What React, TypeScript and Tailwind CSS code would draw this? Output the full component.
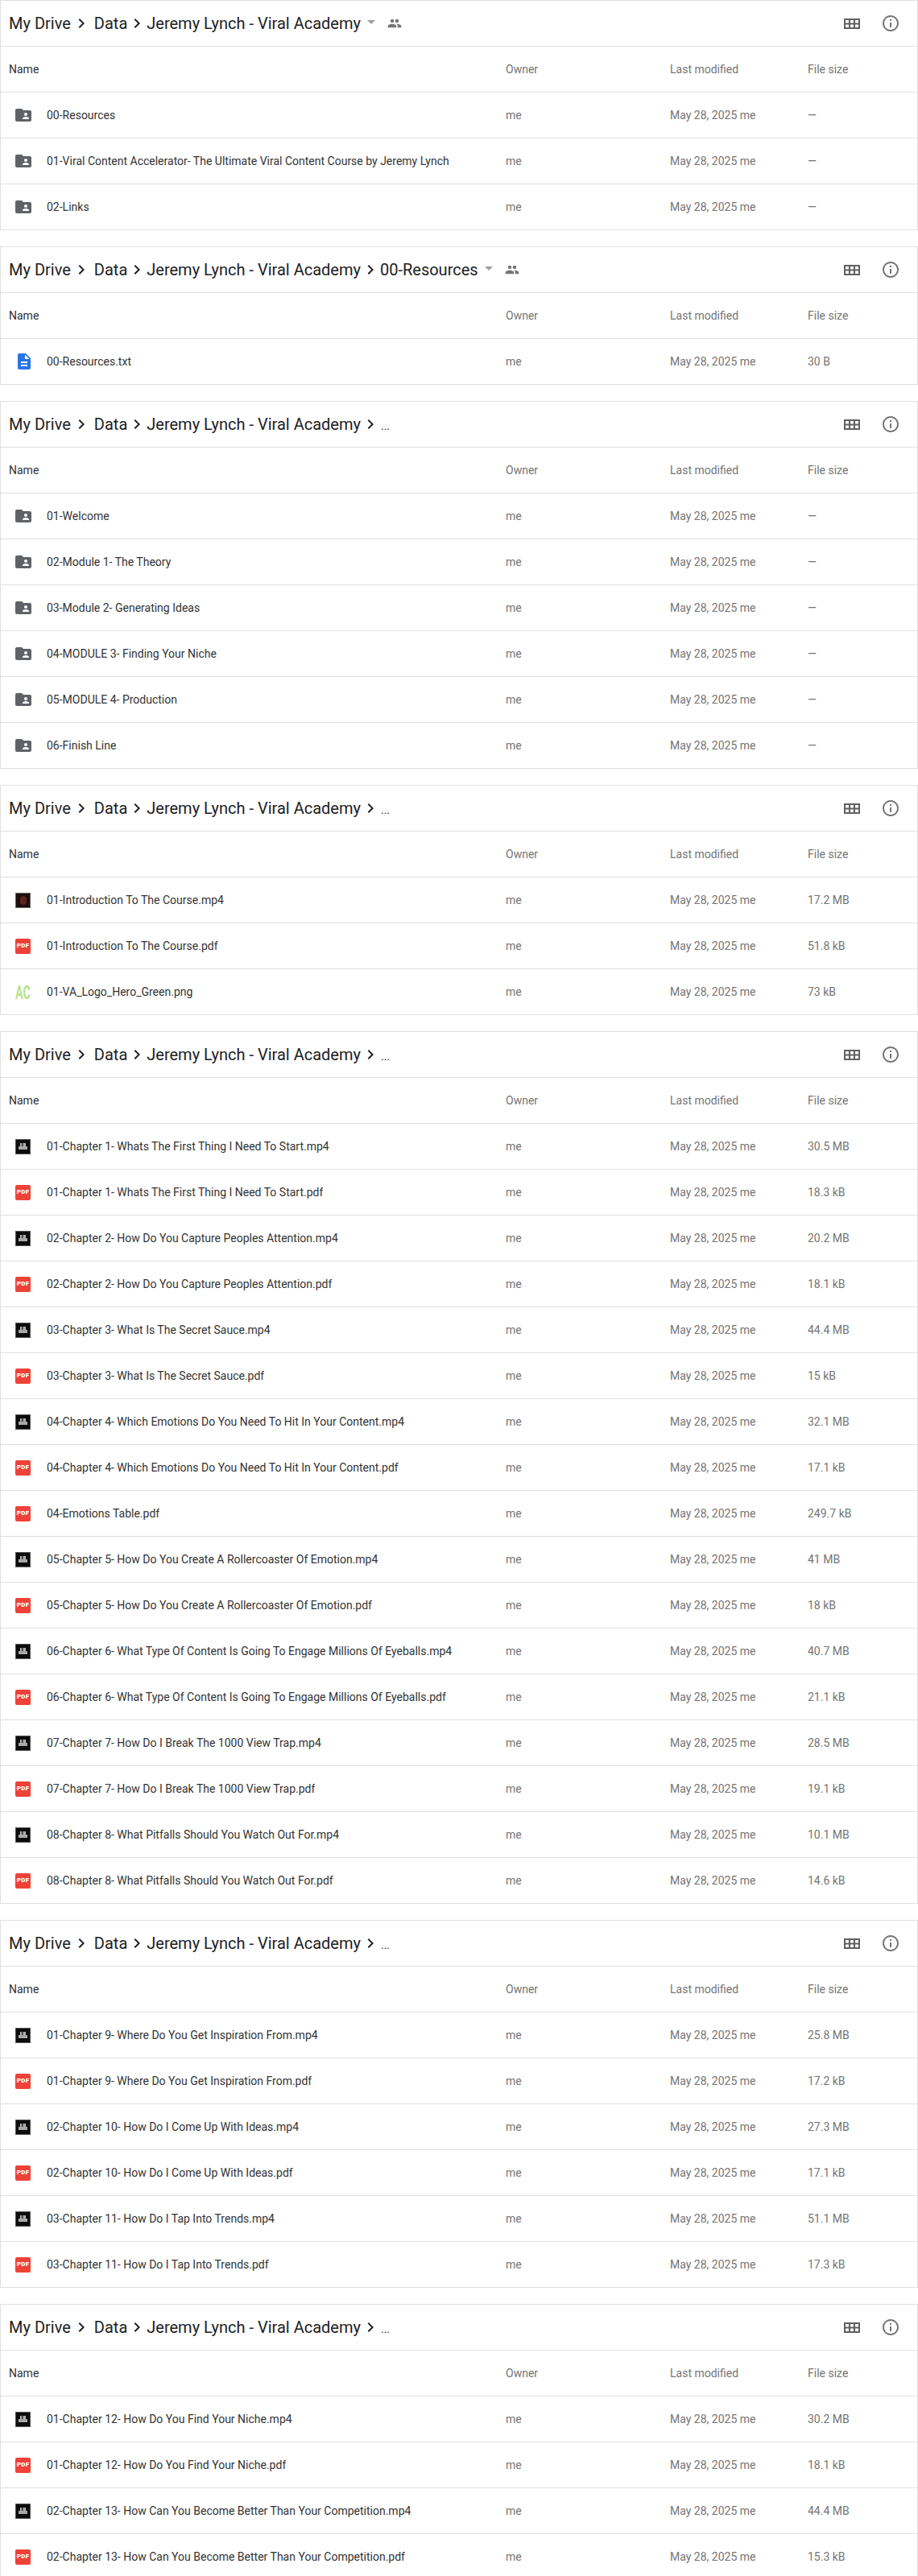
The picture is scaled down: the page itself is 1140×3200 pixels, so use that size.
const font = "font-['Roboto','Liberation_Sans',sans-serif]";

type Kind = "folder" | "doc" | "video" | "intro" | "pdf" | "logo";
type Row = [Kind, string, string];

const m = (name: string, size: string): Row => [name.endsWith(".pdf") ? "pdf" : "video", name, size];

const panels: { crumb?: string; top?: boolean; rows: Row[] }[] = [
  {
    top: true,
    rows: [
      ["folder", "00-Resources", "—"],
      ["folder", "01-Viral Content Accelerator- The Ultimate Viral Content Course by Jeremy Lynch", "—"],
      ["folder", "02-Links", "—"],
    ],
  },
  { crumb: "00-Resources", rows: [["doc", "00-Resources.txt", "30 B"]] },
  {
    rows: [
      ["folder", "01-Welcome", "—"],
      ["folder", "02-Module 1- The Theory", "—"],
      ["folder", "03-Module 2- Generating Ideas", "—"],
      ["folder", "04-MODULE 3- Finding Your Niche", "—"],
      ["folder", "05-MODULE 4- Production", "—"],
      ["folder", "06-Finish Line", "—"],
    ],
  },
  {
    rows: [
      ["intro", "01-Introduction To The Course.mp4", "17.2 MB"],
      ["pdf", "01-Introduction To The Course.pdf", "51.8 kB"],
      ["logo", "01-VA_Logo_Hero_Green.png", "73 kB"],
    ],
  },
  {
    rows: [
      m("01-Chapter 1- Whats The First Thing I Need To Start.mp4", "30.5 MB"),
      m("01-Chapter 1- Whats The First Thing I Need To Start.pdf", "18.3 kB"),
      m("02-Chapter 2- How Do You Capture Peoples Attention.mp4", "20.2 MB"),
      m("02-Chapter 2- How Do You Capture Peoples Attention.pdf", "18.1 kB"),
      m("03-Chapter 3- What Is The Secret Sauce.mp4", "44.4 MB"),
      m("03-Chapter 3- What Is The Secret Sauce.pdf", "15 kB"),
      m("04-Chapter 4- Which Emotions Do You Need To Hit In Your Content.mp4", "32.1 MB"),
      m("04-Chapter 4- Which Emotions Do You Need To Hit In Your Content.pdf", "17.1 kB"),
      m("04-Emotions Table.pdf", "249.7 kB"),
      m("05-Chapter 5- How Do You Create A Rollercoaster Of Emotion.mp4", "41 MB"),
      m("05-Chapter 5- How Do You Create A Rollercoaster Of Emotion.pdf", "18 kB"),
      m("06-Chapter 6- What Type Of Content Is Going To Engage Millions Of Eyeballs.mp4", "40.7 MB"),
      m("06-Chapter 6- What Type Of Content Is Going To Engage Millions Of Eyeballs.pdf", "21.1 kB"),
      m("07-Chapter 7- How Do I Break The 1000 View Trap.mp4", "28.5 MB"),
      m("07-Chapter 7- How Do I Break The 1000 View Trap.pdf", "19.1 kB"),
      m("08-Chapter 8- What Pitfalls Should You Watch Out For.mp4", "10.1 MB"),
      m("08-Chapter 8- What Pitfalls Should You Watch Out For.pdf", "14.6 kB"),
    ],
  },
  {
    rows: [
      m("01-Chapter 9- Where Do You Get Inspiration From.mp4", "25.8 MB"),
      m("01-Chapter 9- Where Do You Get Inspiration From.pdf", "17.2 kB"),
      m("02-Chapter 10- How Do I Come Up With Ideas.mp4", "27.3 MB"),
      m("02-Chapter 10- How Do I Come Up With Ideas.pdf", "17.1 kB"),
      m("03-Chapter 11- How Do I Tap Into Trends.mp4", "51.1 MB"),
      m("03-Chapter 11- How Do I Tap Into Trends.pdf", "17.3 kB"),
    ],
  },
  {
    rows: [
      m("01-Chapter 12- How Do You Find Your Niche.mp4", "30.2 MB"),
      m("01-Chapter 12- How Do You Find Your Niche.pdf", "18.1 kB"),
      m("02-Chapter 13- How Can You Become Better Than Your Competition.mp4", "44.4 MB"),
      m("02-Chapter 13- How Can You Become Better Than Your Competition.pdf", "15.3 kB"),
    ],
  },
];

function Chevron({ className }: { className: string }) {
  return (
    <svg viewBox="0 0 24 24" className={className} fill="#202124">
      <path d="M8.6 16.6 13.2 12 8.6 7.4 10 6l6 6-6 6z" />
    </svg>
  );
}

function People() {
  return (
    <svg viewBox="0 0 24 24" className="ml-[15px] h-[18px] w-[18px] text-[#757575]" fill="currentColor">
      <path d="M16 11c1.66 0 2.99-1.34 2.99-3S17.66 5 16 5s-3 1.34-3 3 1.34 3 3 3zm-8 0c1.66 0 2.99-1.34 2.99-3S9.66 5 8 5 5 6.34 5 8s1.34 3 3 3zm0 2c-2.33 0-7 1.17-7 3.5V19h14v-2.5C15 14.17 10.33 13 8 13zm8 0c-.29 0-.62.02-.97.05 1.16.84 1.97 1.97 1.97 3.45V19h6v-2.5c0-2.33-4.67-3.5-7-3.5z" />
    </svg>
  );
}

function Caret() {
  return <span className="mb-[3px] ml-[8px] h-0 w-0 border-x-[5px] border-t-[5px] border-x-transparent border-t-[#9e9e9e]" />;
}

function FileIcon({ kind }: { kind: Kind }) {
  if (kind === "folder") {
    return (
      <svg viewBox="0 0 24 24" className="-ml-[2px] h-[24px] w-[24px]" fill="#5f6368">
        <path d="M10 4H4c-1.1 0-2 .9-2 2v12c0 1.1.9 2 2 2h16c1.1 0 2-.9 2-2V8c0-1.1-.9-2-2-2h-8l-2-2zm5 5c1.1 0 2 .9 2 2s-.9 2-2 2-2-.9-2-2 .9-2 2-2zm4 8h-8v-1c0-1.33 2.67-2 4-2s4 .67 4 2v1z" />
      </svg>
    );
  }
  if (kind === "doc") {
    return (
      <svg viewBox="0 0 24 24" className="-ml-[1px] h-[24px] w-[24px]" fill="#2a74e6">
        <path d="M6 2c-1.1 0-2 .9-2 2v16c0 1.1.9 2 2 2h12c1.1 0 2-.9 2-2V8l-6-6H6zm7 7V3.5L18.5 9H13zM8 12h8v2H8v-2zm0 4h8v2H8v-2z" />
      </svg>
    );
  }
  if (kind === "pdf") {
    return (
      <div className="flex h-[19px] w-[19px] items-center justify-center rounded-[2px] bg-[#ee4239] text-[8px] leading-none font-black tracking-[0.3px] text-white">
        PDF
      </div>
    );
  }
  if (kind === "video") {
    return (
      <div className="flex h-[19px] w-[19px] flex-col items-center justify-center border border-[#555] bg-[#0c0c0c]">
        <div className="flex gap-[0.5px]">
          <div className="h-[4px] w-[2px] bg-[#b5b5b5]" />
          <div className="h-[4px] w-[2px] bg-[#8f8f8f]" />
          <div className="h-[4px] w-[2px] bg-[#b5b5b5]" />
        </div>
        <div className="h-[4px] w-[11px] bg-[#a8a8a8]" />
      </div>
    );
  }
  if (kind === "intro") {
    return (
      <div className="flex h-[19px] w-[19px] items-center justify-center border border-[#666] bg-[#1d0f0d]">
        <div className="h-[11px] w-[8px] rounded-full bg-[#5a2320]" />
      </div>
    );
  }
  return (
    <svg viewBox="0 0 19 19" className="h-[19px] w-[19px] overflow-visible fill-[#b9e38f] font-bold">
      <text x="0" y="18" fontSize="24" textLength="19" lengthAdjust="spacingAndGlyphs">
        AC
      </text>
    </svg>
  );
}

function Panel({ crumb, top, rows }: { crumb?: string; top?: boolean; rows: Row[] }) {
  return (
    <section className="shrink-0 border-x border-t border-[#e0e0e0]">
      <div className="flex h-[57px] items-center border-b border-[#e0e0e0] pr-[21px] pl-[10px]">
        <div className="flex flex-1 items-center text-[20px] leading-none text-[#202124]">
          <span>My Drive</span>
          <Chevron className="mr-[4px] ml-[1px] h-[24px] w-[24px]" />
          <span>Data</span>
          <Chevron className="h-[24px] w-[24px]" />
          <span>Jeremy Lynch - Viral Academy</span>
          {top ? (
            <>
              <Caret />
              <People />
            </>
          ) : crumb ? (
            <>
              <Chevron className="h-[24px] w-[24px]" />
              <span>{crumb}</span>
              <Caret />
              <People />
            </>
          ) : (
            <>
              <Chevron className="h-[24px] w-[24px]" />
              <span className="mt-[3px] ml-[1px] text-[14px]">...</span>
            </>
          )}
        </div>
        <svg viewBox="0 0 20 13" className="h-[13px] w-[20px]" fill="#616161">
          <path d="M0 0h20v13H0zM2 2v3.5h4V2zm6 0v3.5h4V2zm6 0v3.5h4V2zM2 7.5V11h4V7.5zm6 0V11h4V7.5zm6 0V11h4V7.5z" fillRule="evenodd" />
        </svg>
        <svg viewBox="0 0 24 24" className="ml-[26px] h-[24px] w-[24px]" fill="#757575">
          <path d="M11 7h2v2h-2zm0 4h2v6h-2zm1-9C6.48 2 2 6.48 2 12s4.48 10 10 10 10-4.48 10-10S17.52 2 12 2zm0 18c-4.41 0-8-3.59-8-8s3.59-8 8-8 8 3.59 8 8-3.59 8-8 8z" />
        </svg>
      </div>
      <div className="grid h-[57px] grid-cols-[617px_204px_171px_1fr] items-center border-b border-[#e0e0e0] pl-[10px] text-[14px] text-[#757575]">
        <span className="text-[#333]">Name</span>
        <span>Owner</span>
        <span>Last modified</span>
        <span>File size</span>
      </div>
      {rows.map(([kind, name, size]) => (
        <div
          key={name}
          className="grid h-[57px] grid-cols-[617px_204px_171px_1fr] items-center border-b border-[#e0e0e0] pl-[10px] text-[14px] text-[#757575]"
        >
          <div className="flex min-w-0 items-center text-[#333]">
            <div className="flex w-[47px] shrink-0 pl-[8px]">
              <FileIcon kind={kind} />
            </div>
            <span className="truncate">{name}</span>
          </div>
          <span>me</span>
          <span>May 28, 2025 me</span>
          <span>{size}</span>
        </div>
      ))}
    </section>
  );
}

export default function App() {
  return (
    <div className={`${font} flex h-[3200px] flex-col gap-[20px] overflow-hidden bg-white`}>
      {panels.map((p, i) => (
        <Panel key={i} {...p} />
      ))}
    </div>
  );
}
